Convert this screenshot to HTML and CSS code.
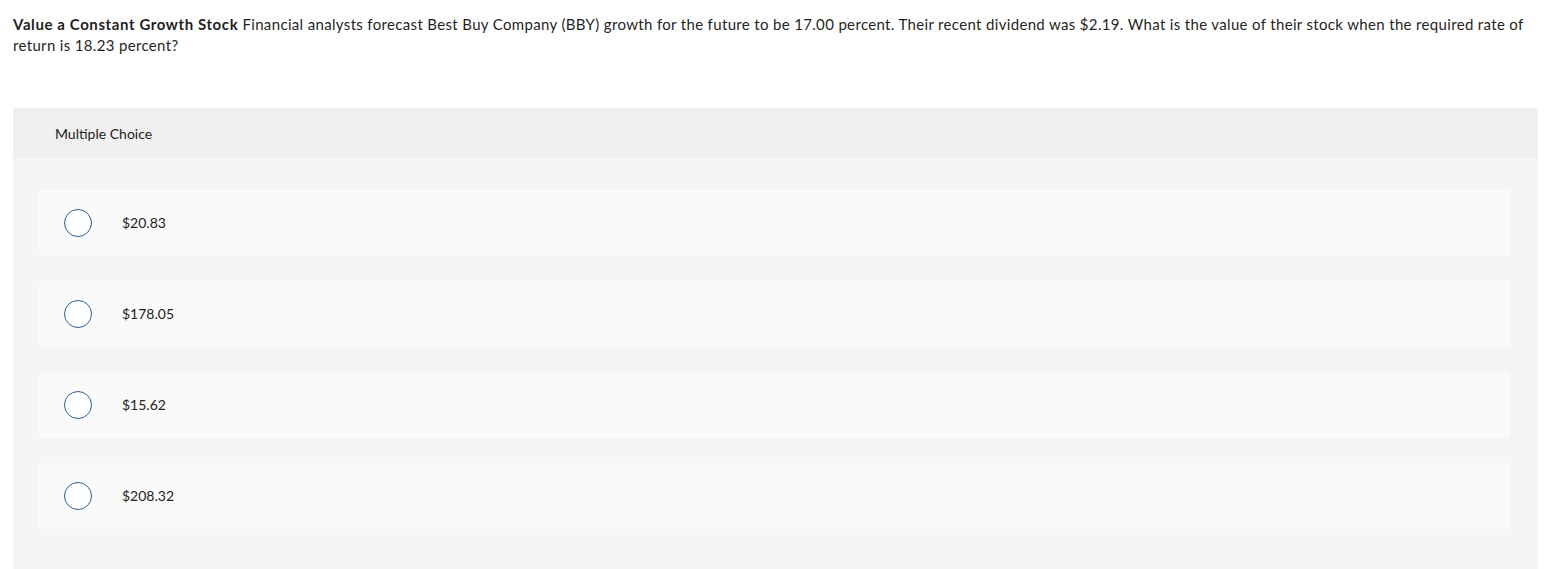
FILE: index.html
```html
<!DOCTYPE html>
<html>
<head>
<meta charset="utf-8">
<link rel="stylesheet" href="styles.css">
</head>
<body>
<div class="page">
  <p class="question"><strong>Value a Constant Growth Stock</strong> Financial analysts forecast Best Buy Company (BBY) growth for the future to be 17.00 percent. Their recent dividend was $2.19. What is the value of their stock when the required rate of return is 18.23 percent?</p>
  <div class="panel">
    <div class="panel-header">Multiple Choice</div>
    <div class="options">
      <div class="option"><span class="radio"></span><span class="label">$20.83</span></div>
      <div class="option"><span class="radio"></span><span class="label">$178.05</span></div>
      <div class="option"><span class="radio"></span><span class="label">$15.62</span></div>
      <div class="option"><span class="radio"></span><span class="label">$208.32</span></div>
    </div>
  </div>
</div>
</body>
</html>
```
FILE: styles.css
```css
html, body {
  margin: 0;
  padding: 0;
  background: #ffffff;
}
body {
  font-family: "Lato", "Liberation Sans", sans-serif;
  color: #1f1f1f;
}
.page {
  margin-left: 13px;
  width: 1525px;
}
.question {
  margin: 0;
  padding-top: 14px;
  font-size: 15px;
  line-height: 21px;
  letter-spacing: 0.34px;
  width: 1520px;
}
.question strong {
  font-weight: 700;
  letter-spacing: 0.6px;
}
.panel {
  margin-top: 52px;
  background: #f5f5f5;
  height: 470px;
}
.panel-header {
  background: #f0f0f0;
  height: 50px;
  display: flex;
  align-items: center;
  padding-left: 42px;
  font-size: 14px;
  color: #222;
}
.options {
  display: flex;
  flex-direction: column;
  gap: 25px;
  padding: 32px 28px 0 26px;
}
.option {
  height: 66px;
  background: #fafafa;
  border-radius: 3px;
  display: flex;
  align-items: center;
  padding-left: 25px;
}
.radio {
  width: 28px;
  height: 28px;
  border: 1.5px solid #2d5f8e;
  border-radius: 50%;
  background: #fff;
  box-sizing: border-box;
  flex: none;
}
.label {
  margin-left: 30px;
  margin-top: -1px;
  font-size: 14px;
  color: #222;
}
```
